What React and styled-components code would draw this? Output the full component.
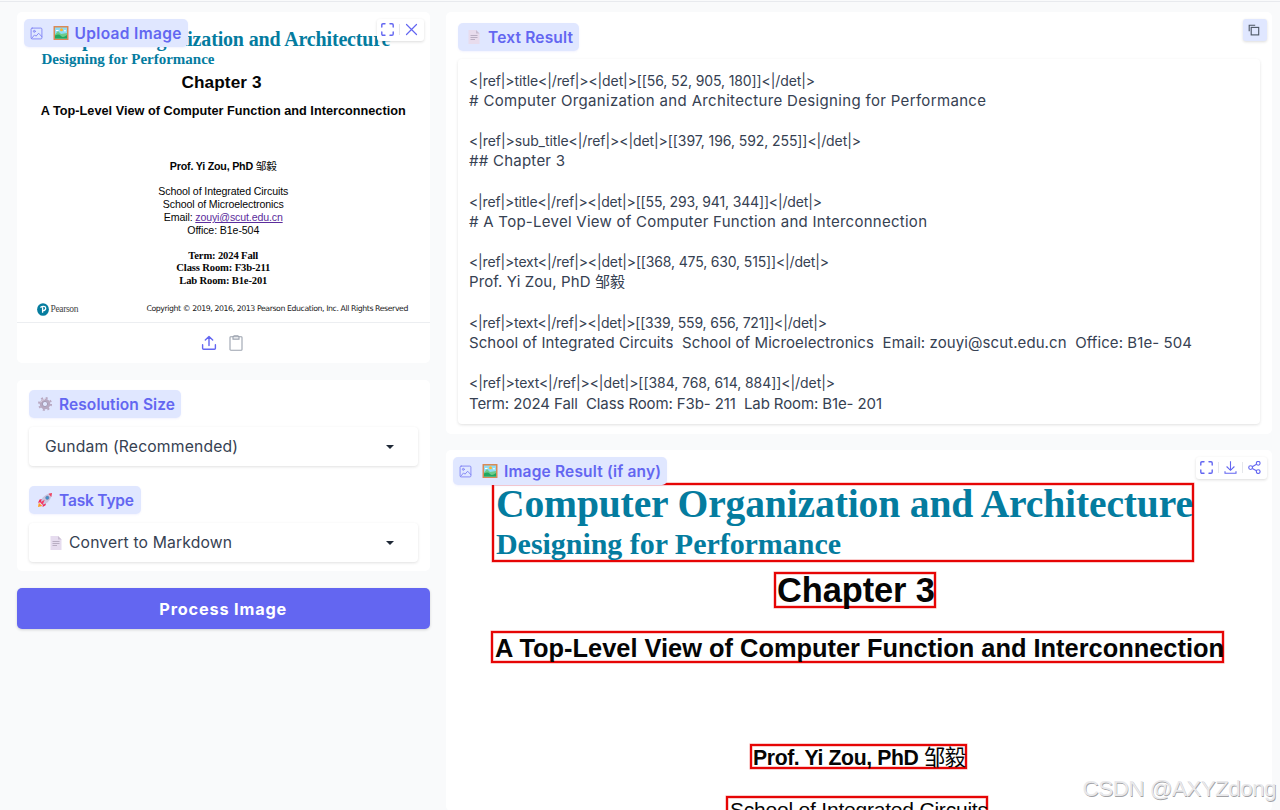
import React, { useLayoutEffect, useRef, useState } from 'react';
import styled, { createGlobalStyle } from 'styled-components';

const GlobalStyle = createGlobalStyle`
*{
    box-sizing:border-box;
}
html, body{
    margin:0;
    height:100%;
    overflow:hidden;
}
body{
    background:#f9fafb;
    color:#364152;
    font-family:Inter, "Noto Sans CJK SC", sans-serif;
    font-size:14px;
}
`
const Page = styled.main`
height:810px;
overflow:hidden;
position:relative;
padding-top:1px;
`
const TopRule = styled.div`
height:1px;
background:#e8eaee;
`
const Columns = styled.div`
display:grid;
grid-template-columns:413.5px 826px;
gap:16px;
padding:10px 8px 0 16.5px;
`
const Column = styled.div`
display:flex;
flex-direction:column;
gap:${p => p.$gap || 17}px;
`
const Card = styled.section`
position:relative;
background:white;
border-radius:5px;
height:${p => p.$height}px;
padding:${p => p.$padding || 0};
`
const Label = styled.div`
display:flex;
align-items:center;
width:${p => p.$width}px;
height:28px;
padding-left:${p => (p.$floating ? 6 : 8)}px;
border-radius:5px;
background:#e0e7ff;
color:#6366f1;
font-size:15.5px;
font-weight:600;
box-shadow:0 1px 2px rgba(99,102,241,0.08);
${p => p.$floating && `
position:absolute;
z-index:2;
top:7px;
left:7px;
`}
> svg{
    flex:none;
    margin-right:${p => (p.$floating ? 10 : 6)}px;
}
> svg + svg{
    margin-right:6px;
}
`
const Toolbar = styled.div`
position:absolute;
z-index:2;
top:7px;
right:${p => p.$right || 5}px;
display:flex;
align-items:center;
justify-content:space-between;
width:${p => p.$width}px;
height:22px;
padding:0 6px 1px 4px;
border-radius:3px;
background:${p => p.$background || 'white'};
color:${p => p.$color || '#6366f1'};
box-shadow:0 1px 3px rgba(0,0,0,0.14);
`
const Divider = styled.i`
width:1px;
height:11px;
background:#e5e7eb;
`
const Slide = styled.div`
display:flex;
flex-direction:column;
align-items:center;
height:311px;
padding:15px 1px 0;
border-bottom:1px solid #eceef1;
color:#050505;
font-family:"Liberation Sans", "Noto Sans CJK SC", sans-serif;
`
const SlideLine = styled.div`
white-space:nowrap;
font-size:${p => p.$size}px;
line-height:${p => p.$line}px;
height:${p => p.$line}px;
margin-top:${p => p.$top || 0}px;
font-weight:${p => (p.$bold ? 700 : 400)};
${p => p.$serif && 'font-family:"Liberation Serif", serif;'}
${p => p.$teal && 'color:#047c9f;'}
${p => p.$left && `
align-self:flex-start;
margin-left:${p.$left}px;
`}
`
const MailLink = styled.span`
color:#5b2d9c;
text-decoration:underline;
`
const Hanzi = styled.span`
font-weight:400;
`
const SlideFooter = styled.div`
display:flex;
align-items:center;
align-self:stretch;
height:14px;
margin-top:15.5px;
padding:0 21px 0 19px;
color:#222;
white-space:nowrap;
`
const Brand = styled.span`
flex:1;
margin-left:2px;
color:#444;
font:9.5px/14px "Liberation Serif", serif;
`
const Copyright = styled.span`
font:7.8px/14px "DejaVu Sans", sans-serif;
`
const SourceTools = styled.div`
display:flex;
align-items:center;
justify-content:center;
gap:12px;
height:40px;
padding-right:2px;
color:#9ca3af;
svg:first-child{
    color:#6366f1;
}
`
const Select = styled.div`
display:flex;
align-items:center;
justify-content:space-between;
width:388.5px;
height:39px;
margin:${p => p.$margin};
padding:0 24px 0 16px;
border-radius:4px;
background:white;
box-shadow:0 1px 3px rgba(0,0,0,0.12);
font-size:15.7px;
`
const SelectValue = styled.span`
display:flex;
align-items:center;
gap:7px;
padding-left:${p => p.$indent || 0}px;
`
const Caret = styled.i`
border:4.5px solid transparent;
border-top:4.5px solid #1f2937;
border-bottom:0;
`
const ProcessButton = styled.button`
height:41px;
border:0;
border-radius:5px;
background:#6366f1;
color:white;
font:700 16.3px Inter, sans-serif;
box-shadow:0 1px 3px rgba(0,0,0,0.16);
`
const Output = styled.div`
width:802px;
height:365px;
margin-top:8px;
padding:11.5px 11px;
border-radius:4px;
box-shadow:0 1px 3px rgba(0,0,0,0.12);
`
const OutputLine = styled.div`
height:20.2px;
line-height:20.2px;
font-size:${p => (p.$tag ? 14 : 15)}px;
white-space:pre;
`
const Annotated = styled.div`
display:flex;
flex-direction:column;
height:361px;
overflow:hidden;
padding-top:33px;
color:#050505;
font-family:"Liberation Sans", "Noto Sans CJK SC", sans-serif;
`
const Region = styled.div`
flex:none;
width:${p => p.$width}px;
height:${p => p.$height}px;
margin:${p => p.$top || 0}px 0 0 ${p => p.$left}px;
padding-left:${p => p.$pad || 2}px;
border:2px solid #e60505;
box-shadow:0 0 0 0.5px rgba(230,5,5,0.4), inset 0 0 0 0.5px rgba(230,5,5,0.4);
`
const Watermark = styled.div`
position:absolute;
z-index:3;
right:4px;
top:775px;
color:#e9e9eb;
font:22.5px/27px "Liberation Sans", sans-serif;
white-space:nowrap;
text-shadow:0.7px 0.7px 0.6px rgba(120,120,125,0.7);
`
const TextRun = styled.span`
display:inline-block;
white-space:pre;
`

// spreads the letters so that a line takes exactly the given width
function Fit({ width, children }) {
    const ref = useRef(null);
    const [spacing, setSpacing] = useState(0);

    useLayoutEffect(() => {
        const el = ref.current;
        const count = Array.from(el.textContent).length;
        el.style.letterSpacing = '0px';
        setSpacing((width - el.getBoundingClientRect().width) / (count - 1));
    }, [width]);

    return <TextRun ref={ref} style={{ letterSpacing: `${spacing}px` }}>{children}</TextRun>;
}

const ImageIcon = () => (
    <svg width="13" height="13" viewBox="0 0 24 24" fill="none" stroke="#8184f4" strokeWidth="1.7" strokeLinecap="round" strokeLinejoin="round">
        <rect x="2" y="2" width="20" height="20" rx="2" />
        <circle cx="8" cy="8" r="1.8" />
        <path d="M3 21 8.5 14.5 11 17 16 11.5 22 18" />
    </svg>
)

const PictureEmoji = () => (
    <svg width="16" height="16" viewBox="0 0 16 16">
        <rect x="0.5" y="1" width="15" height="14" rx="0.5" fill="#d98a56" />
        <rect x="2" y="2.5" width="12" height="11" fill="#8edcf5" />
        <circle cx="8.5" cy="4.8" r="1.5" fill="#ffb52c" />
        <path d="M2 9.5 5 6 8 9 14 8v5.5H2z" fill="#6ccb8b" />
        <path d="M2 10.5Q6 8.5 8 11T14 10v3.5H2z" fill="#20a760" />
        <path d="M3 5.5h2.5M11 5.8h2" stroke="white" />
    </svg>
)

const PageEmoji = ({ pink }) => (
    <svg width={pink ? 16 : 12} height="16" viewBox={pink ? '-2 0 16 16' : '0 0 12 16'}>
        <path d="M0.5 1H8l3.5 3.5V15H0.5z" fill={pink ? '#e8dced' : '#e6dcef'} />
        <path d="M8 1v3.5h3.5z" fill="#c9bdd2" />
        <path d="M2.5 6.5h7M2.5 8.5h7M2.5 10.5h4.5" stroke="#b3a8bd" strokeWidth="0.9" />
    </svg>
)

const GearEmoji = () => (
    <svg width="16" height="16" viewBox="0 0 16 16" fill="none">
        <circle cx="8" cy="8" r="6" stroke="#b9a9c2" strokeWidth="2" strokeDasharray="2 2.712" />
        <circle cx="8" cy="8" r="4" stroke="#b7a8c1" strokeWidth="2.5" />
        <circle cx="8" cy="8" r="2.6" stroke="#8f829d" strokeWidth="0.7" />
        <path d="M3.7 6.5A4.6 4.6 0 0 1 8 3.4" stroke="#dbd0e2" />
    </svg>
)

const RocketEmoji = () => (
    <svg width="16" height="16" viewBox="0 0 16 16">
        <path d="M1 15 1.8 10.8 5.3 14z" fill="#ff9d24" />
        <path d="M5.5 7 2.6 7.5 1 10.8 5 10zM9 10.5 8.6 13.3 5.6 15 6 11z" fill="#ee285c" />
        <path d="M3.8 10.8C4 6 8 1.8 15 1c-.6 6.7-4.8 11-9.4 11.6z" fill="#c8c5df" />
        <path d="M11.5 1.7 15 1l-.7 3.9z" fill="#f3405e" />
        <path d="M3 10.5 7.7 7.7 5.6 13z" fill="#f33e68" />
        <circle cx="10.3" cy="5.8" r="1.7" fill="#3d92ca" stroke="#7375a2" strokeWidth="0.5" />
    </svg>
)

const Maximize = () => (
    <svg width="13" height="13" viewBox="0 0 13 13" fill="none" stroke="currentColor" strokeWidth="1.4" strokeLinecap="round" strokeLinejoin="round">
        <path d="M.8 4V2Q.8.8 2 .8h2M9 .8h2q1.2 0 1.2 1.2v2M12.2 9v2q0 1.2-1.2 1.2H9M4 12.2H2Q.8 12.2.8 11V9" />
    </svg>
)

const Close = () => (
    <svg width="13" height="13" viewBox="0 0 13 13" stroke="currentColor" strokeWidth="1.2" strokeLinecap="round">
        <path d="M1.5 1.5l10 10M11.5 1.5l-10 10" />
    </svg>
)

const Download = () => (
    <svg width="13" height="13" viewBox="0 0 13 13" fill="none" stroke="currentColor" strokeWidth="1.1">
        <path d="M6.5.2v9M2.6 5.5l3.9 3.8 3.9-3.8M1 10.2v2.1h11v-2.1" />
    </svg>
)

const Share = () => (
    <svg width="13" height="13" viewBox="0 0 13 13" fill="none" stroke="currentColor" strokeWidth="1.1">
        <circle cx="2.6" cy="6.6" r="1.9" />
        <circle cx="10.2" cy="2.3" r="1.9" />
        <circle cx="10.2" cy="10.6" r="1.9" />
        <path d="M4.3 5.7l4.2-2.4M4.3 7.6l4.2 2.2" />
    </svg>
)

const Copy = () => (
    <svg width="13" height="12" viewBox="-1 0 13 12" fill="none" stroke="currentColor" strokeWidth="1.1">
        <rect x="3.2" y="3.4" width="7.5" height="7.5" />
        <path d="M1.2 7.2V1.2h6" />
    </svg>
)

const Upload = () => (
    <svg width="16" height="16" viewBox="0 0 16 16" fill="none" stroke="currentColor" strokeWidth="1.4" strokeLinecap="round" strokeLinejoin="round">
        <path d="M8 10.5V1.8M4.3 5 8 1.6 11.7 5M1.6 9.8v3.4q0 1 1 1h10.8q1 0 1-1V9.8" />
    </svg>
)

const Clipboard = () => (
    <svg width="14" height="16" viewBox="0 0 14 16" fill="none" stroke="currentColor" strokeWidth="1.1">
        <rect x="1" y="1.8" width="12" height="13.4" rx="0.8" />
        <path d="M4 1.8V4.1h6V1.8L8.8.7H5.2z" />
    </svg>
)

const PearsonLogo = () => (
    <svg width="12" height="13" viewBox="0 0 12 13">
        <ellipse cx="6" cy="6.5" rx="5.9" ry="6.3" fill="#067d9f" />
        <path d="M3.4 4.4C5.5 2.8 8.8 3 8.7 5.2 8.7 7 7 7.8 5.7 7.5M5.6 4.2v5.6" fill="none" stroke="white" strokeWidth="1.3" />
    </svg>
)

const output = [
    ['<|ref|>title<|/ref|><|det|>[[56, 52, 905, 180]]<|/det|>', 346],
    ['# Computer Organization and Architecture Designing for Performance', 517],
    null,
    ['<|ref|>sub_title<|/ref|><|det|>[[397, 196, 592, 255]]<|/det|>', 392],
    ['## Chapter 3', 96],
    null,
    ['<|ref|>title<|/ref|><|det|>[[55, 293, 941, 344]]<|/det|>', 353],
    ['# A Top-Level View of Computer Function and Interconnection', 458],
    null,
    ['<|ref|>text<|/ref|><|det|>[[368, 475, 630, 515]]<|/det|>', 360],
    ['Prof. Yi Zou, PhD 邹毅', 156],
    null,
    ['<|ref|>text<|/ref|><|det|>[[339, 559, 656, 721]]<|/det|>', 358],
    ['School of Integrated Circuits  School of Microelectronics  Email: zouyi@scut.edu.cn  Office: B1e- 504', 723],
    null,
    ['<|ref|>text<|/ref|><|det|>[[384, 768, 614, 884]]<|/det|>', 366],
    ['Term: 2024 Fall  Class Room: F3b- 211  Lab Room: B1e- 201', 413],
];

function UploadCard() {
    return (
        <Card $height={351}>
            <Label $floating $width={164}>
                <ImageIcon /><PictureEmoji /><Fit width={107}>Upload Image</Fit>
            </Label>
            <Toolbar $width={47} $right={6}>
                <Maximize /><Divider /><Close />
            </Toolbar>
            <Slide>
                <SlideLine $serif $bold $teal $size={20} $line={22} $top={0.5} $left={24}>
                    <Fit width={349}>Computer Organization and Architecture</Fit>
                </SlideLine>
                <SlideLine $serif $bold $teal $size={15} $line={18} $top={0.5} $left={24}>
                    <Fit width={173}>Designing for Performance</Fit>
                </SlideLine>
                <SlideLine $bold $size={17.2} $line={20} $top={4} $left={164}>
                    <Fit width={80}>Chapter 3</Fit>
                </SlideLine>
                <SlideLine $bold $size={12.7} $line={16} $top={11}>
                    <Fit width={365}>A Top-Level View of Computer Function and Interconnection</Fit>
                </SlideLine>
                <SlideLine $bold $size={10.7} $line={14} $top={39.5}>
                    <Fit width={107}>Prof. Yi Zou, PhD <Hanzi>邹毅</Hanzi></Fit>
                </SlideLine>
                <SlideLine $size={10.6} $line={13} $top={12.5}>
                    <Fit width={130}>School of Integrated Circuits</Fit>
                </SlideLine>
                <SlideLine $size={10.6} $line={13}>
                    <Fit width={121}>School of Microelectronics</Fit>
                </SlideLine>
                <SlideLine $size={10.6} $line={13}>
                    <Fit width={119}>Email: <MailLink>zouyi@scut.edu.cn</MailLink></Fit>
                </SlideLine>
                <SlideLine $size={10.6} $line={13}>
                    <Fit width={72}>Office: B1e-504</Fit>
                </SlideLine>
                <SlideLine $serif $bold $size={10.6} $line={12.3} $top={13}>
                    <Fit width={70}>Term: 2024 Fall</Fit>
                </SlideLine>
                <SlideLine $serif $bold $size={10.6} $line={12.3}>
                    <Fit width={94}>Class Room: F3b-211</Fit>
                </SlideLine>
                <SlideLine $serif $bold $size={10.6} $line={12.3}>
                    <Fit width={88}>Lab Room: B1e-201</Fit>
                </SlideLine>
                <SlideFooter>
                    <PearsonLogo />
                    <Brand><Fit width={28}>Pearson</Fit></Brand>
                    <Copyright>
                        <Fit width={262}>Copyright © 2019, 2016, 2013 Pearson Education, Inc. All Rights Reserved</Fit>
                    </Copyright>
                </SlideFooter>
            </Slide>
            <SourceTools>
                <Upload /><Clipboard />
            </SourceTools>
        </Card>
    );
}

function SettingsCard() {
    return (
        <Card $height={191} $padding="10px 12.5px">
            <Label $width={152}><GearEmoji /><Fit width={116}>Resolution Size</Fit></Label>
            <Select $margin="9px 0 20px">
                <SelectValue><Fit width={193}>Gundam (Recommended)</Fit></SelectValue>
                <Caret />
            </Select>
            <Label $width={111.5}><RocketEmoji /><Fit width={75}>Task Type</Fit></Label>
            <Select $margin="9px 0 0">
                <SelectValue $indent={5}><PageEmoji /><Fit width={163}>Convert to Markdown</Fit></SelectValue>
                <Caret />
            </Select>
        </Card>
    );
}

function TextResult() {
    return (
        <Card $height={422} $padding="11px 12px">
            <Label $width={121}><PageEmoji pink /><Fit width={85}>Text Result</Fit></Label>
            <Toolbar $width={24} $background="#e0e7ff" $color="#4b5563">
                <Copy />
            </Toolbar>
            <Output>
                {output.map((line, i) => (
                    <OutputLine key={i} $tag={line && line[0].startsWith('<')}>
                        {line && <Fit width={line[1]}>{line[0]}</Fit>}
                    </OutputLine>
                ))}
            </Output>
        </Card>
    );
}

function ImageResult() {
    return (
        <Card $height={361}>
            <Label $floating $width={214}>
                <ImageIcon /><PictureEmoji /><Fit width={157}>Image Result (if any)</Fit>
            </Label>
            <Toolbar $width={71}>
                <Maximize /><Divider /><Download /><Divider /><Share />
            </Toolbar>
            <Annotated>
                <Region $width={702} $height={79} $left={46}>
                    <SlideLine $serif $bold $teal $size={39.6} $line={36} $top={1}>
                        <Fit width={697}>Computer Organization and Architecture</Fit>
                    </SlideLine>
                    <SlideLine $serif $bold $teal $size={30} $line={34} $top={5}>
                        <Fit width={345}>Designing for Performance</Fit>
                    </SlideLine>
                </Region>
                <Region $width={162} $height={36} $left={328} $top={10} $pad={1}>
                    <SlideLine $bold $size={34.4} $line={32}>
                        <Fit width={158}>Chapter 3</Fit>
                    </SlideLine>
                </Region>
                <Region $width={733} $height={32} $left={45} $top={23}>
                    <SlideLine $bold $size={25.4} $line={28} $top={0.5}>
                        <Fit width={729}>A Top-Level View of Computer Function and Interconnection</Fit>
                    </SlideLine>
                </Region>
                <Region $width={217} $height={25} $left={304} $top={81} $pad={1}>
                    <SlideLine $bold $size={21.2} $line={22} $top={0.5}>
                        <Fit width={213}>Prof. Yi Zou, PhD <Hanzi>邹毅</Hanzi></Fit>
                    </SlideLine>
                </Region>
                <Region $width={262} $height={28} $left={280} $top={27}>
                    <SlideLine $size={21} $line={24}>
                        <Fit width={258}>School of Integrated Circuits</Fit>
                    </SlideLine>
                </Region>
            </Annotated>
        </Card>
    );
}

function App() {
    return (
        <Page>
            <GlobalStyle />
            <TopRule />
            <Columns>
                <Column>
                    <UploadCard />
                    <SettingsCard />
                    <ProcessButton><Fit width={127}>Process Image</Fit></ProcessButton>
                </Column>
                <Column $gap={16}>
                    <TextResult />
                    <ImageResult />
                </Column>
            </Columns>
            <Watermark><Fit width={194}>CSDN @AXYZdong</Fit></Watermark>
        </Page>
    );
}

export default App;
